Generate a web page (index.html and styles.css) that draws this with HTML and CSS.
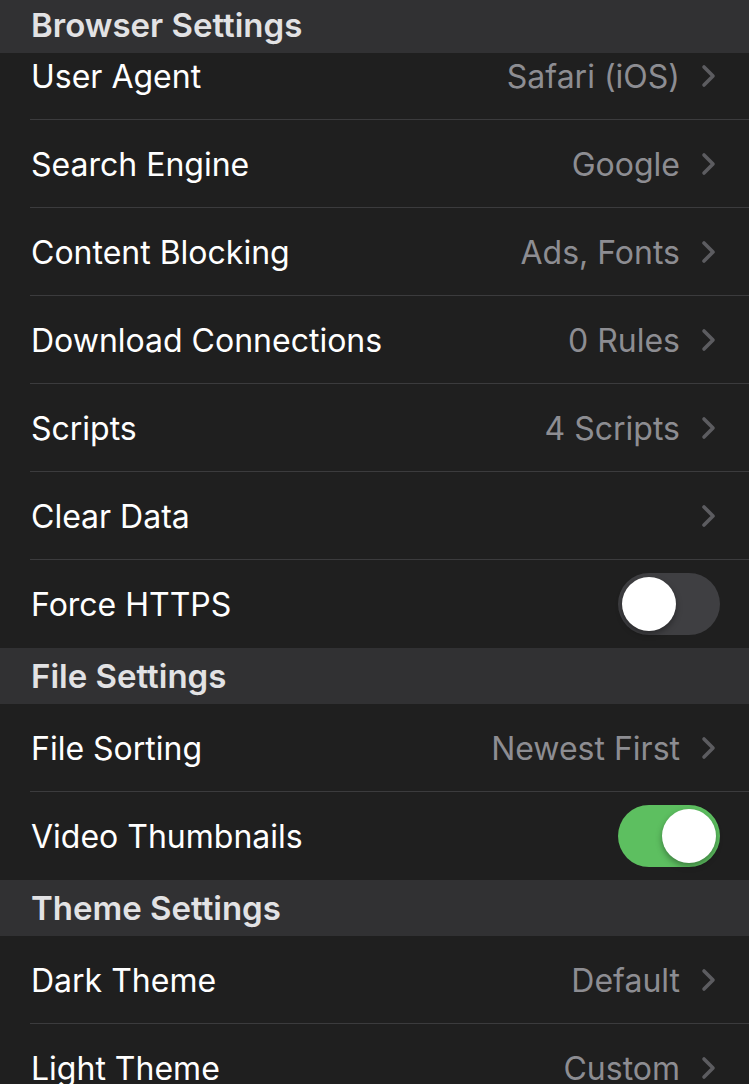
FILE: index.html
```html
<!DOCTYPE html>
<html lang="en">
<head>
<meta charset="utf-8">
<title>Settings</title>
<link rel="stylesheet" href="styles.css">
</head>
<body>
<div class="screen">
  <div class="section-header first">Browser Settings</div>
  <div class="group">
    <div class="row scrolled">
      <span class="label">User Agent</span>
      <span class="value">Safari (iOS)</span>
      <svg class="chev" viewBox="0 0 16 24"><path d="M3 3l9 9-9 9"/></svg>
    </div>
    <div class="row">
      <span class="label">Search Engine</span>
      <span class="value">Google</span>
      <svg class="chev" viewBox="0 0 16 24"><path d="M3 3l9 9-9 9"/></svg>
    </div>
    <div class="row">
      <span class="label">Content Blocking</span>
      <span class="value">Ads, Fonts</span>
      <svg class="chev" viewBox="0 0 16 24"><path d="M3 3l9 9-9 9"/></svg>
    </div>
    <div class="row">
      <span class="label">Download Connections</span>
      <span class="value">0 Rules</span>
      <svg class="chev" viewBox="0 0 16 24"><path d="M3 3l9 9-9 9"/></svg>
    </div>
    <div class="row">
      <span class="label">Scripts</span>
      <span class="value">4 Scripts</span>
      <svg class="chev" viewBox="0 0 16 24"><path d="M3 3l9 9-9 9"/></svg>
    </div>
    <div class="row">
      <span class="label">Clear Data</span>
      <span class="value"></span>
      <svg class="chev" viewBox="0 0 16 24"><path d="M3 3l9 9-9 9"/></svg>
    </div>
    <div class="row last">
      <span class="label">Force HTTPS</span>
      <span class="toggle"><span class="knob"></span></span>
    </div>
  </div>
  <div class="section-header">File Settings</div>
  <div class="group">
    <div class="row">
      <span class="label">File Sorting</span>
      <span class="value">Newest First</span>
      <svg class="chev" viewBox="0 0 16 24"><path d="M3 3l9 9-9 9"/></svg>
    </div>
    <div class="row last">
      <span class="label">Video Thumbnails</span>
      <span class="toggle on"><span class="knob"></span></span>
    </div>
  </div>
  <div class="section-header">Theme Settings</div>
  <div class="group">
    <div class="row">
      <span class="label">Dark Theme</span>
      <span class="value">Default</span>
      <svg class="chev" viewBox="0 0 16 24"><path d="M3 3l9 9-9 9"/></svg>
    </div>
    <div class="row">
      <span class="label">Light Theme</span>
      <span class="value">Custom</span>
      <svg class="chev" viewBox="0 0 16 24"><path d="M3 3l9 9-9 9"/></svg>
    </div>
  </div>
</div>
</body>
</html>
```

FILE: styles.css
```css
html, body {
  margin: 0;
  padding: 0;
  background: #1f1f1f;
}
.screen {
  width: 749px;
  height: 1084px;
  overflow: hidden;
  font-family: Inter, "Noto Sans", sans-serif;
  background: #1f1f1f;
}
.section-header {
  position: relative;
  z-index: 2;
  height: 56px;
  box-sizing: border-box;
  padding-left: 31px;
  display: flex;
  align-items: center;
  background: #313133;
  color: #e2e2e4;
  font-size: 33px;
  font-weight: 600;
  letter-spacing: 0;
}
.section-header.first {
  height: 53px;
  padding-bottom: 4px;
}
.group {
  background: #1f1f1f;
}
.row {
  height: 88px;
  display: flex;
  align-items: center;
  padding-left: 31px;
  padding-right: 30px;
  position: relative;
}
.row::after {
  content: "";
  position: absolute;
  left: 30px;
  right: 0;
  bottom: 0;
  height: 1px;
  background: #3b3b3d;
}
.row.last::after {
  display: none;
}
.row.scrolled {
  margin-top: -21px;
}
.label {
  flex: 1;
  color: #ffffff;
  font-size: 32px;
  font-weight: 400;
}
.value {
  color: #8d8d92;
  font-size: 32px;
  margin-right: 21px;
}
.chev {
  width: 16px;
  height: 24px;
  fill: none;
  stroke: #5c5c60;
  stroke-width: 3.6;
  stroke-linecap: round;
  stroke-linejoin: round;
  margin-right: 2px;
}
.toggle {
  width: 102px;
  height: 62px;
  border-radius: 31px;
  background: #3f3f42;
  position: relative;
  box-sizing: border-box;
  margin-right: -1px;
}
.toggle .knob {
  position: absolute;
  top: 4px;
  left: 4px;
  width: 54px;
  height: 54px;
  border-radius: 50%;
  background: #ffffff;
  box-shadow: 0 3px 6px rgba(0,0,0,0.35);
}
.toggle.on {
  background: #5dbf60;
}
.toggle.on .knob {
  left: 44px;
}
```
